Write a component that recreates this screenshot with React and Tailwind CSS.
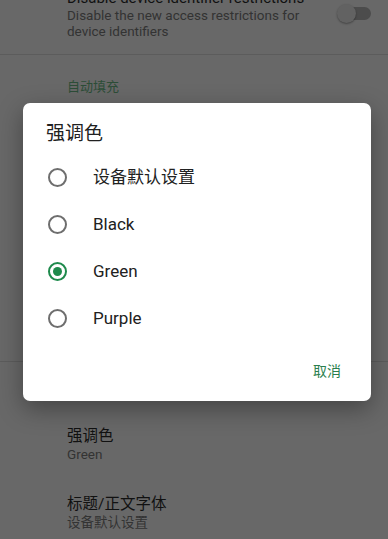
import React from "react";

const font = "font-['Roboto','Noto_Sans_CJK_SC',sans-serif]";

function Radio({ checked }) {
  return checked ? (
    <div className="w-[19px] h-[19px] rounded-full border-2 border-[#1e8a4c] flex items-center justify-center">
      <div className="w-[9px] h-[9px] rounded-full bg-[#1e8a4c]" />
    </div>
  ) : (
    <div className="w-[19px] h-[19px] rounded-full border-2 border-[#6e6e6e]" />
  );
}

export default function App() {
  const options = ["设备默认设置", "Black", "Green", "Purple"];
  return (
    <div className={`relative w-[388px] h-[539px] overflow-hidden bg-[#686868] ${font}`}>
      <div className="flex flex-col">
        <div className="flex -mt-[10px] h-[65px] border-b border-[#5c5c5c] pl-[67px] pr-[17px]">
          <div className="flex-1 flex flex-col">
            <div className="text-[15px] leading-[17px] text-[#111] whitespace-nowrap">Disable device identifier restrictions</div>
            <div className="text-[13.5px] leading-[16px] text-[#333]">
              Disable the new access restrictions for
              <br />
              device identifiers
            </div>
          </div>
          <div className="relative w-[34px] h-[20px] mt-[14px]">
            <div className="absolute left-[3px] right-0 top-[3px] h-[13px] rounded-full bg-[#4c4c4c]" />
            <div className="absolute left-0 top-0 w-[19px] h-[19px] rounded-full bg-[#626262] shadow-[0_1px_2px_rgba(0,0,0,0.35)]" />
          </div>
        </div>
        <div className="mt-[23px] pl-[67px] text-[13px] leading-[18px] text-[#2c4d37]">自动填充</div>
        <div className="h-[265px]" />
        <div className="border-b border-[#5c5c5c]" />
        <div className="h-[64px]" />
        <div className="pl-[67px] flex flex-col">
          <div className="text-[15.5px] leading-[20px] text-[#111]">强调色</div>
          <div className="text-[13.5px] leading-[16px] text-[#333]">Green</div>
          <div className="mt-[32px] text-[15.5px] leading-[20px] text-[#111]">标题/正文字体</div>
          <div className="text-[13.5px] leading-[16px] text-[#333]">设备默认设置</div>
        </div>
      </div>

      <div className="absolute left-[23px] top-[103px] w-[348px] h-[298px] rounded-[7px] bg-white shadow-[0_8px_24px_rgba(0,0,0,0.35)] flex flex-col">
        <div className="pt-[19px] pl-[23px] text-[19px] leading-[24px] text-[#212121]">强调色</div>
        <div className="mt-[8px] flex flex-col">
          {options.map((o) => (
            <div key={o} className="h-[47px] flex items-center">
              <div className="w-[70px] pl-[25px] flex items-center">
                <Radio checked={o === "Green"} />
              </div>
              <div className="text-[17px] text-[#212121]">{o}</div>
            </div>
          ))}
        </div>
        <div className="flex-1" />
        <div className="flex justify-end pr-[30px] pb-[21px]">
          <div className="text-[14px] leading-[18px] text-[#2b7f4e]">取消</div>
        </div>
      </div>
    </div>
  );
}
